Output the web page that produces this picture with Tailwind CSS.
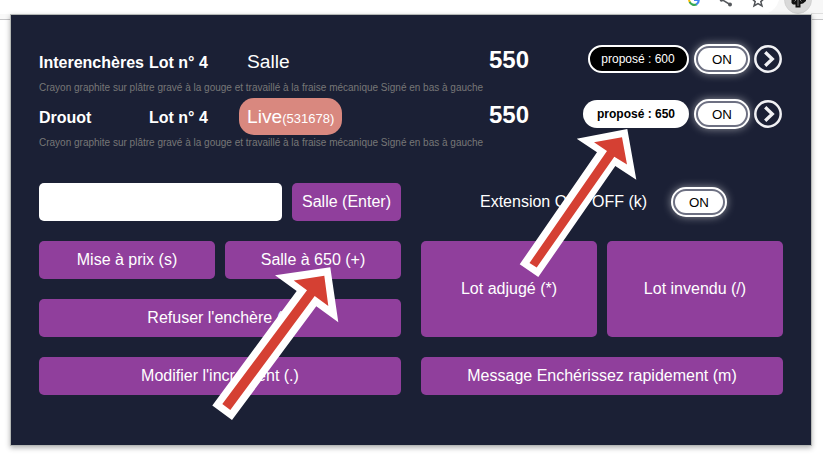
<!DOCTYPE html>
<html lang="fr">
<head>
<meta charset="utf-8">
<title>Enchères</title>
<script src="https://cdn.jsdelivr.net/npm/@tailwindcss/browser@4"></script>
</head>
<body class="relative h-[463px] w-[823px] overflow-hidden bg-white font-['Liberation_Sans',Arial,sans-serif] text-base text-white">
  <!-- Browser toolbar -->
  <header class="flex h-[20px] items-start overflow-hidden border-b border-[#c4c4c6] bg-[#fdfdfd]">
    <svg class="h-[20px] w-full" viewBox="0 0 823 20" fill="none">
      <path d="M0 14H823V19H0Z" fill="#f9f9f9"/>
      <path d="M0 0H779Q776 14 766 14H0Z" fill="#fff"/>
      <path d="M779 0H823V13H768Q776 10 779 0Z" fill="#f7f7f7"/>
      <path d="M811 13.500H823" stroke="#dedede"/>
      <path d="M689.100 -1.500A5 5 0 0 0 690 2.300" stroke="#fbbc05" stroke-width="2"/>
      <path d="M689.700 1.800A5 5 0 0 0 696.800 4.300" stroke="#34a853" stroke-width="2.200"/>
      <path d="M696.300 4.400A5 5 0 0 0 698.700 0H694" stroke="#4285f4" stroke-width="2.200"/>
      <path d="M721 -1L730 4.500" stroke="#55585c" stroke-width="1.500"/>
      <circle cx="721.500" cy="0" r="1.800" fill="#55585c"/><circle cx="730" cy="4.500" r="2" fill="#55585c"/>
      <path d="M758 -6L759.700 -1.500L764 -1.200L760.800 1.600L762 6L758 3.600L754 6L755.200 1.600L752 -1.200L756.300 -1.500Z" stroke="#505357" stroke-width="1.500"/>
      <circle cx="798" cy="0" r="13.500" fill="#d9d9d9" stroke="#c8c8c8" stroke-width=".6"/>
      <path d="M791.500 -2V3L793 4.500H795.500V7.500H800.500V4L803 3.500L806 1V-2Z" fill="#111"/>
      <path d="M798 0V6M794.500 1.500L796 0M801.500 1.500L800 0" stroke="#999" stroke-width=".8"/>
    </svg>
  </header>

  <!-- Extension popup -->
  <main class="absolute left-[11px] top-[15px] h-[430px] w-[800px] bg-[#1b2035] px-7 pt-7 shadow-[0_0_0_1px_#b4b7b5,0_2px_5px_1px_rgba(0,0,0,0.3)]">
    <section class="h-[55px]">
      <div class="flex h-[37px] items-center">
        <h2 class="w-[110px] whitespace-nowrap pt-0.5 font-bold">Interenchères</h2>
        <span class="w-[90px] pt-0.5 font-bold">Lot n° 4</span>
        <div class="w-[250px]"><span class="inline-flex h-[37px] items-center px-2 pt-0.5 text-[19.2px]">Salle</span></div>
        <strong class="-mt-1 text-2xl leading-7">550</strong>
        <div class="-mt-[5px] ml-auto flex items-center">
          <button class="mr-[5px] h-7 w-[101px] rounded-full border-2 border-white bg-black pr-px text-xs">proposé : 600</button>
          <button class="mr-1 h-[30px] w-14 rounded-full border-2 border-white bg-[#6d7082] p-0.5 shadow-[0_0_8px_rgba(255,255,255,0.5)]"><span class="flex h-full items-center justify-center rounded-full bg-white pt-0.5 text-[13.3px] text-black">ON</span></button>
          <svg class="mr-px size-7" viewBox="0 0 28 28" fill="none" stroke="#f1f1f4"><circle cx="14" cy="14" r="12.700" stroke-width="2.500"/><path d="M11.200 7.200L18.300 14L11.200 20.800" stroke-width="3.300"/></svg>
        </div>
      </div>
      <p class="text-[10px] leading-[15px] text-[#777]">Crayon graphite sur plâtre gravé à la gouge et travaillé à la fraise mécanique Signé en bas à gauche</p>
    </section>
    <section class="h-[55px]">
      <div class="flex h-[37px] items-center">
        <h2 class="w-[110px] whitespace-nowrap pt-0.5 font-bold">Drouot</h2>
        <span class="w-[90px] pt-0.5 font-bold">Lot n° 4</span>
        <div class="w-[250px]"><span class="inline-flex h-[37px] items-center rounded-[15px] bg-[#d9887f] px-2 pt-0.5 text-[19.2px]"><span class="flex items-baseline">Live<span class="text-[13px]">(531678)</span></span></span></div>
        <strong class="-mt-1 text-2xl leading-7">550</strong>
        <div class="-mt-[5px] ml-auto flex items-center">
          <button class="mr-[5px] h-7 w-[106px] rounded-full bg-white text-xs font-bold text-black">proposé : 650</button>
          <button class="mr-1 h-[30px] w-14 rounded-full border-2 border-white bg-[#6d7082] p-0.5 shadow-[0_0_8px_rgba(255,255,255,0.5)]"><span class="flex h-full items-center justify-center rounded-full bg-white pt-0.5 text-[13.3px] text-black">ON</span></button>
          <svg class="mr-px size-7" viewBox="0 0 28 28" fill="none" stroke="#f1f1f4"><circle cx="14" cy="14" r="12.700" stroke-width="2.500"/><path d="M11.200 7.200L18.300 14L11.200 20.800" stroke-width="3.300"/></svg>
        </div>
      </div>
      <p class="text-[10px] leading-[15px] text-[#777]">Crayon graphite sur plâtre gravé à la gouge et travaillé à la fraise mécanique Signé en bas à gauche</p>
    </section>

    <section class="mt-[30px] grid grid-cols-[362px_362px] gap-5">
      <div class="flex flex-col gap-5">
        <div class="flex gap-2.5">
          <input type="text" class="h-[38px] w-[243px] rounded-[5px] bg-white px-2 text-black">
          <button class="h-[38px] w-[109px] rounded-[5px] bg-[#903f9c]">Salle (Enter)</button>
        </div>
        <div class="grid grid-cols-2 gap-2.5">
          <button class="h-[38px] rounded-[5px] bg-[#903f9c]">Mise à prix (s)</button>
          <button class="h-[38px] rounded-[5px] bg-[#903f9c]">Salle à 650 (+)</button>
        </div>
        <button class="h-[38px] rounded-[5px] bg-[#903f9c]">Refuser l'enchère (-)</button>
        <button class="h-[38px] rounded-[5px] bg-[#903f9c]">Modifier l'increment (.)</button>
      </div>
      <div class="flex flex-col gap-5">
        <div class="flex h-[38px] items-center pl-[59px]">
          <span class="w-[191px] whitespace-nowrap">Extension ON / OFF (k)</span>
          <button class="h-[30px] w-14 rounded-full border-2 border-white bg-[#6d7082] p-0.5 shadow-[0_0_8px_rgba(255,255,255,0.5)]"><span class="flex h-full items-center justify-center rounded-full bg-white pt-0.5 text-[13.3px] text-black">ON</span></button>
        </div>
        <div class="grid h-24 grid-cols-2 gap-2.5">
          <button class="rounded-[5px] bg-[#903f9c]">Lot adjugé (*)</button>
          <button class="rounded-[5px] bg-[#903f9c]">Lot invendu (/)</button>
        </div>
        <button class="h-[38px] rounded-[5px] bg-[#903f9c]">Message Enchérissez rapidement (m)</button>
      </div>
    </section>
  </main>

  <!-- Annotation arrows -->
  <svg class="pointer-events-none absolute left-0 top-0" width="823" height="463" viewBox="0 0 823 463">
    <path fill="#fff" d="M627.300 129L576.700 138.700L597 152.300L519.700 264.300L538.300 277L615.300 166L636.300 179.700Z"/>
    <path fill="#d54033" d="M622 137.300L594 142.200L607 151L529.500 263L536.700 267.500L614.300 156.700L627 164.500Z"/>
    <path fill="#fff" d="M330.300 267.300L275 275.200L296.700 291L212.300 405.400L232 420L316.300 306.300L338.300 322.300Z"/>
    <path fill="#d54033" d="M324.300 275.700L293.700 280.500L307 290.300L222.300 404L230.300 410L314.700 296L328.300 306Z"/>
  </svg>
</body>
</html>
